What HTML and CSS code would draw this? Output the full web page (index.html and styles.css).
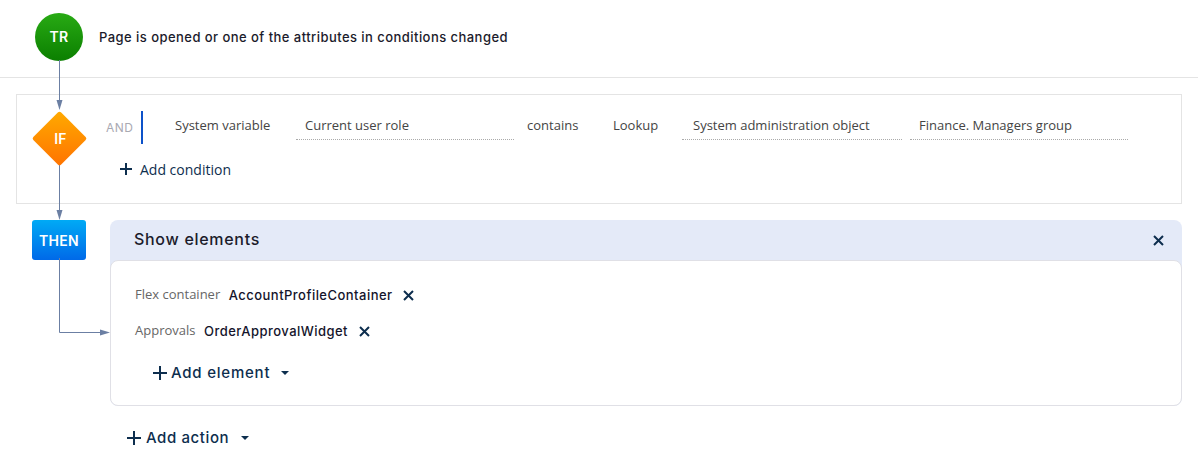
FILE: index.html
```html
<!DOCTYPE html>
<html lang="en">
<head>
    <meta charset="UTF-8">
    <meta name="viewport" content="width=device-width, initial-scale=1.0">
    <title>Business rule</title>
    <link rel="stylesheet" href="styles.css">
</head>
<body>
    <svg class="connectors" width="120" height="345" viewBox="0 0 120 345">
        <path class="line" d="M59.5 60V106M59.5 164V212M59.5 258V332.5H104"/>
        <path class="arrow" d="M56.5 100H62.5L59.5 110Z"/>
        <path class="arrow" d="M56.5 210H62.5L59.5 220Z"/>
        <path class="arrow" d="M100 329.5V335.5L110 332.5Z"/>
    </svg>

    <div class="trigger-row">
        <div class="node node-tr">TR</div>
        <div class="trigger-text">Page is opened or one of the attributes in conditions changed</div>
    </div>

    <div class="if-box">
        <div class="diamond-wrap">
            <div class="diamond"></div>
            <span class="diamond-label">IF</span>
        </div>
        <div class="if-content">
            <div class="condition">
                <span class="and-label">AND</span>
                <span class="and-bar"></span>
                <span class="cond-text cond-type">System variable</span>
                <span class="cond-text cond-field field-role">Current user role</span>
                <span class="cond-text cond-op">contains</span>
                <span class="cond-text cond-lookup">Lookup</span>
                <span class="cond-text cond-field field-object">System administration object</span>
                <span class="cond-text cond-field field-group">Finance. Managers group</span>
            </div>
            <div class="add-condition">
                <svg class="plus" width="14" height="14" viewBox="0 0 14 14"><path d="M7 1V13M1 7H13"/></svg>
                <span>Add condition</span>
            </div>
        </div>
    </div>

    <div class="then-row">
        <div class="node node-then">THEN</div>
        <div class="action-panel">
            <div class="action-header">
                <span class="action-title">Show elements</span>
                <svg class="cross" width="11" height="11" viewBox="0 0 11 11"><path d="M1 1L10 10M10 1L1 10"/></svg>
            </div>
            <div class="action-body">
                <div class="element-row">
                    <span class="element-type">Flex container</span>
                    <span class="element-name">AccountProfileContainer</span>
                    <svg class="cross" width="11" height="11" viewBox="0 0 11 11"><path d="M1 1L10 10M10 1L1 10"/></svg>
                </div>
                <div class="element-row">
                    <span class="element-type">Approvals</span>
                    <span class="element-name">OrderApprovalWidget</span>
                    <svg class="cross" width="11" height="11" viewBox="0 0 11 11"><path d="M1 1L10 10M10 1L1 10"/></svg>
                </div>
                <div class="add-btn add-element">
                    <svg class="plus" width="14" height="14" viewBox="0 0 14 14"><path d="M7 0V14M0 7H14"/></svg>
                    <span>Add element</span>
                    <span class="caret"></span>
                </div>
            </div>
        </div>
    </div>

    <div class="add-btn add-action">
        <svg class="plus" width="14" height="14" viewBox="0 0 14 14"><path d="M7 0V14M0 7H14"/></svg>
        <span>Add action</span>
        <span class="caret"></span>
    </div>
</body>
</html>
```

FILE: styles.css
```css
* {
    box-sizing: border-box;
}
body {
    margin: 0;
    position: relative;
    height: 464px;
    overflow: hidden;
    background-color: #fff;
    font-family: "Noto Sans", sans-serif;
    color: #0d2e4e;
}
.connectors {
    position: absolute;
    left: 0;
    top: 0;
    z-index: 1;
}
.line {
    fill: none;
    stroke: #6b7fa3;
    stroke-width: 1;
}
.arrow {
    fill: #6b7fa3;
}
.node {
    color: #fff;
    font-family: Inter, sans-serif;
    font-weight: 600;
    display: flex;
    align-items: center;
    justify-content: center;
}
.trigger-row {
    height: 78px;
    border-bottom: 1px solid #e4e4e4;
    padding: 13px 0 0 35px;
    display: flex;
    gap: 16px;
}
.node-tr {
    width: 48px;
    height: 48px;
    border-radius: 50%;
    font-size: 14px;
    letter-spacing: 0.3px;
    padding-bottom: 1px;
    background: linear-gradient(#28aa14, #0b7f00);
}
.trigger-text {
    font-family: Inter, sans-serif;
    font-size: 13px;
    font-weight: 500;
    letter-spacing: 0.45px;
    line-height: 48px;
    color: #1b1b2b;
}
.if-box {
    margin: 16px 16px 0;
    height: 110px;
    border: 1px solid #e4e4e4;
    padding: 16px 0 0 15px;
    display: flex;
}
.diamond-wrap {
    position: relative;
    width: 55px;
    height: 55px;
    z-index: 2;
    display: flex;
    align-items: center;
    justify-content: center;
}
.diamond {
    position: absolute;
    left: 8px;
    top: 8px;
    width: 39px;
    height: 39px;
    transform: rotate(45deg);
    background: linear-gradient(135deg, #ffaa00, #ff7300);
    border-radius: 2px;
}
.diamond-label {
    position: relative;
    left: 1px;
    color: #fff;
    font-family: Inter, sans-serif;
    font-size: 14px;
    font-weight: 600;
    letter-spacing: 0.3px;
}
.if-content {
    margin-left: 19px;
}
.condition {
    display: flex;
    align-items: flex-start;
    height: 33px;
    position: relative;
}
.and-label {
    width: 35px;
    font-family: Inter, sans-serif;
    font-size: 12px;
    letter-spacing: 0.5px;
    color: #a9a9b2;
    line-height: 34px;
}
.and-bar {
    width: 2px;
    height: 33px;
    background-color: #0d52c9;
}
.cond-text {
    font-family: "Open Sans", sans-serif;
    font-size: 13px;
    color: #444;
    line-height: 28px;
    white-space: nowrap;
}
.cond-field {
    height: 29px;
    padding-left: 9px;
    line-height: 29px;
    border-bottom: 1px dotted #aaa;
}
.cond-type {
    margin-left: 32px;
    width: 121px;
}
.field-role {
    width: 218px;
}
.cond-op {
    margin-left: 13px;
    width: 86px;
}
.cond-lookup {
    width: 69px;
}
.field-object {
    width: 220px;
    padding-left: 11px;
}
.field-group {
    margin-left: 8px;
    width: 218px;
}
.add-condition {
    margin: 15px 0 0 13px;
    display: flex;
    align-items: center;
    gap: 7px;
    height: 20px;
    font-family: "Open Sans", sans-serif;
    font-size: 14px;
    color: #0d2e4e;
}
.plus {
    fill: none;
    stroke: #0d2e4e;
    stroke-width: 2;
}
.cross {
    fill: none;
    stroke: #0d2e4e;
    stroke-width: 2;
}
.then-row {
    margin: 16px 16px 0 32px;
    display: flex;
    gap: 24px;
    align-items: flex-start;
}
.node-then {
    width: 54px;
    height: 40px;
    border-radius: 3px;
    font-size: 14px;
    letter-spacing: 0.3px;
    background: linear-gradient(#00aaf5, #0069e8);
}
.action-panel {
    flex: 1;
    height: 186px;
    background-color: #e4eaf8;
    border-radius: 8px;
}
.action-header {
    height: 40px;
    padding: 0 18px 0 24px;
    display: flex;
    align-items: center;
    justify-content: space-between;
}
.action-title {
    font-family: Inter, sans-serif;
    font-size: 16px;
    font-weight: 500;
    letter-spacing: 0.7px;
    padding-bottom: 2px;
    color: #1b1b2b;
}
.action-body {
    height: 146px;
    background-color: #fff;
    border: 1px solid #e0e0e6;
    border-radius: 8px;
    padding: 16px 0 0 24px;
}
.element-row {
    display: flex;
    align-items: center;
    height: 36px;
}
.element-type {
    font-family: "Open Sans", sans-serif;
    font-size: 13px;
    color: #666;
    margin-right: 8.5px;
    padding-bottom: 2px;
}
.element-name {
    font-family: Inter, sans-serif;
    font-size: 13px;
    font-weight: 500;
    letter-spacing: 0.47px;
    color: #14142b;
    margin-right: 10.5px;
}
.add-btn {
    display: flex;
    align-items: center;
    gap: 5px;
    font-family: Inter, sans-serif;
    font-size: 15px;
    font-weight: 500;
    letter-spacing: 0.6px;
    color: #0d2e4e;
}
.add-element {
    margin: 14px 0 0 18px;
    gap: 4px;
    letter-spacing: 0.78px;
}
.add-action {
    margin: 22px 0 0 127px;
}
.caret {
    width: 0;
    height: 0;
    margin-left: 7px;
    border-left: 4px solid transparent;
    border-right: 4px solid transparent;
    border-top: 4px solid #0d2e4e;
}
```
